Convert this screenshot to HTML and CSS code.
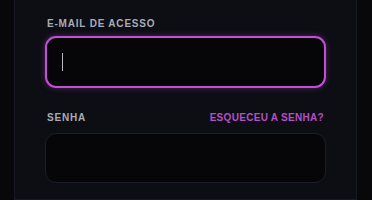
FILE: index.html
```html
<!DOCTYPE html>
<html lang="pt-BR">
<head>
    <meta charset="UTF-8">
    <meta name="viewport" content="width=device-width, initial-scale=1.0">
    <title>Login</title>
    <link rel="stylesheet" href="styles.css">
</head>
<body>
    <div class="page">
        <div class="card">
            <div class="field">
                <label class="label" for="email">E-mail de acesso</label>
                <div class="input input-focus">
                    <span class="caret"></span>
                </div>
            </div>
            <div class="field">
                <div class="label-row">
                    <label class="label" for="senha">Senha</label>
                    <a class="forgot" href="#">Esqueceu a senha?</a>
                </div>
                <div class="input"></div>
            </div>
        </div>
    </div>
</body>
</html>
```

FILE: styles.css
```css
body {
    margin: 0;
    background-color: #08070a;
    font-family: "Liberation Sans", Arial, sans-serif;
}
.page {
    padding: 0 15px 0 14px;
}
.card {
    box-sizing: border-box;
    height: 200px;
    background-color: #0c0e14;
    border: 1px solid #171a22;
    border-top: 0;
    padding: 17px 30px 0 30px;
}
.field {
    display: flex;
    flex-direction: column;
}
.field + .field {
    margin-top: 23px;
}
.label-row {
    display: flex;
    justify-content: space-between;
    align-items: center;
}
.label {
    display: block;
    padding-left: 2px;
    font-size: 10px;
    line-height: 14px;
    font-weight: bold;
    letter-spacing: 0.8px;
    text-transform: uppercase;
    color: #a8abb6;
}
.forgot {
    font-size: 10px;
    line-height: 14px;
    font-weight: bold;
    letter-spacing: 0.3px;
    text-transform: uppercase;
    color: #b54ec7;
    text-decoration: none;
    margin-right: 2px;
}
.input {
    margin-top: 8px;
    height: 48px;
    border: 1px solid #1b1e27;
    border-radius: 11px;
    background-color: #060609;
    display: flex;
    align-items: center;
    padding-left: 16px;
}
.input-focus {
    margin-top: 5px;
    border: 2px solid #c24fd6;
    box-shadow: 0 0 6px rgba(194, 79, 214, 0.35);
    padding-left: 15px;
}
.caret {
    width: 1px;
    height: 18px;
    background-color: #b8b8c0;
}
```
